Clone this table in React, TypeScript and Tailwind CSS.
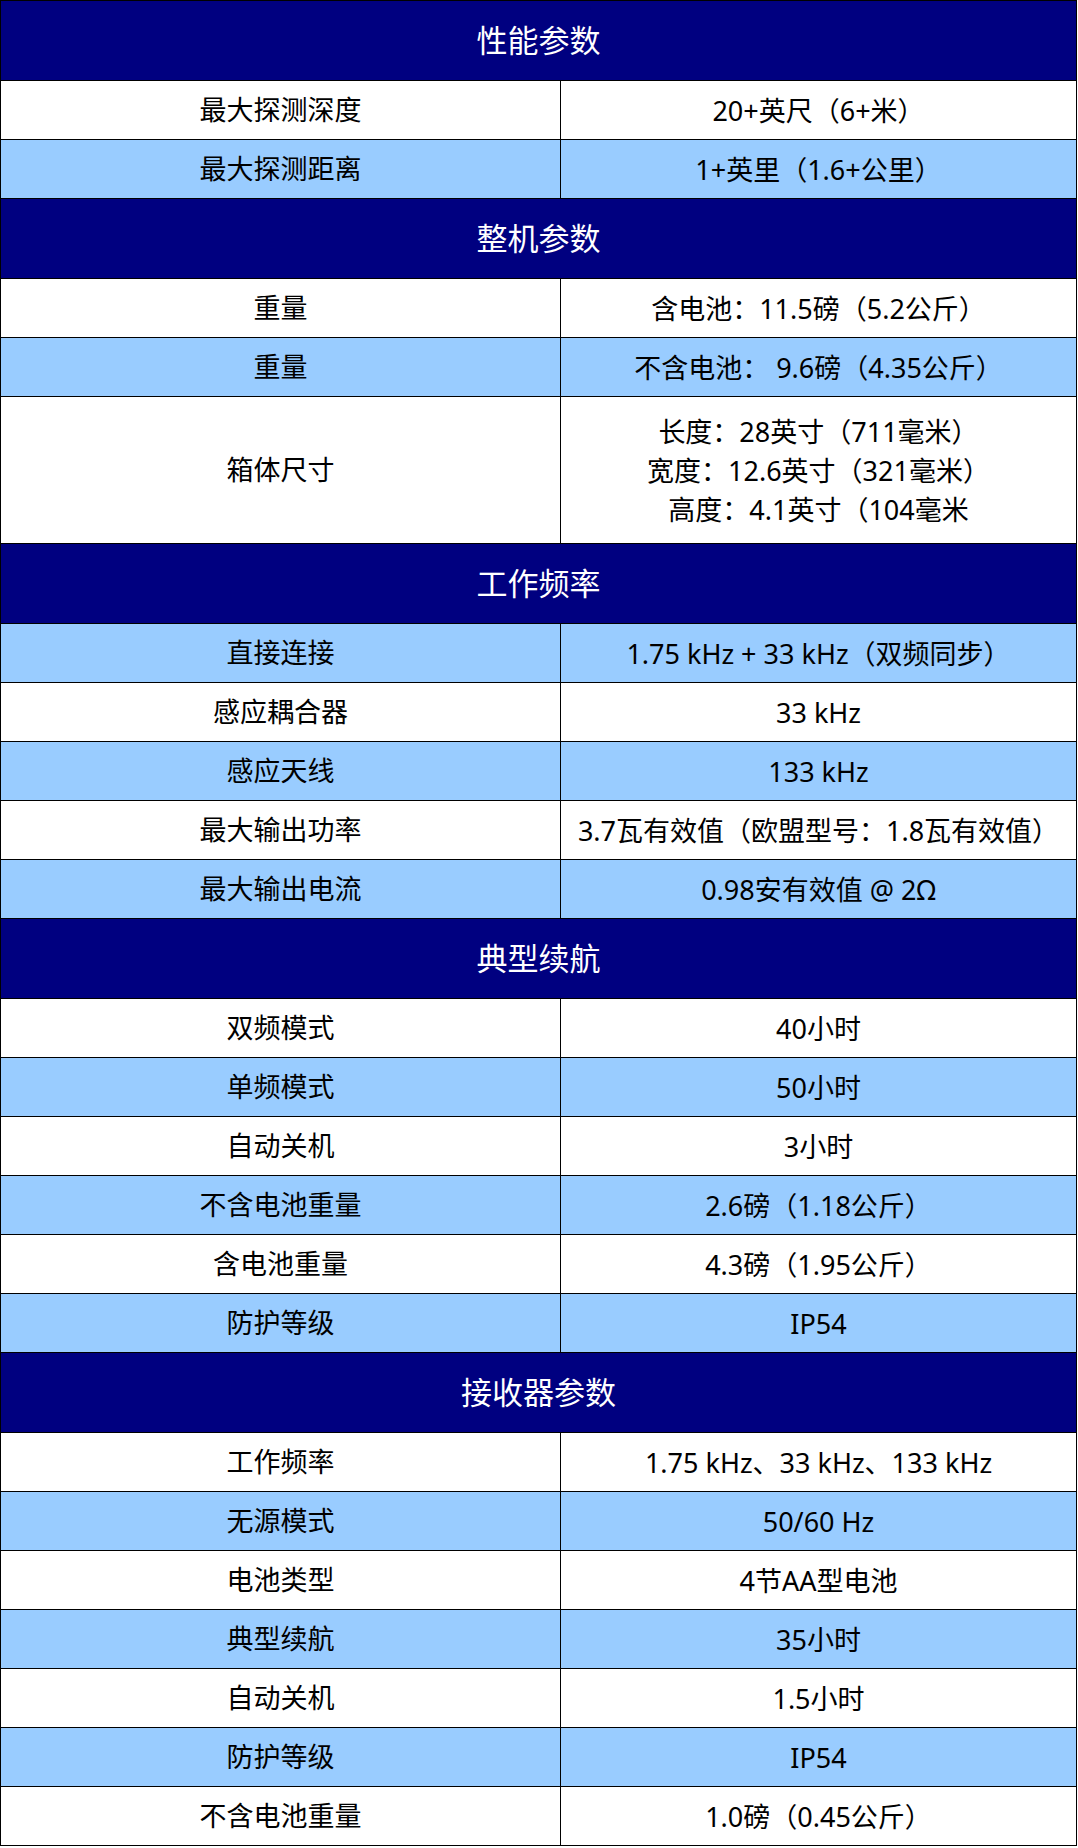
type Row = { label: string; value: string[]; blue?: boolean; tall?: boolean };
type Section = { title: string; rows: Row[] };

const sections: Section[] = [
  {
    title: '性能参数',
    rows: [
      { label: '最大探测深度', value: ['20+英尺（6+米）'] },
      { label: '最大探测距离', value: ['1+英里（1.6+公里）'], blue: true },
    ],
  },
  {
    title: '整机参数',
    rows: [
      { label: '重量', value: ['含电池：11.5磅（5.2公斤）'] },
      { label: '重量', value: ['不含电池： 9.6磅（4.35公斤）'], blue: true },
      {
        label: '箱体尺寸',
        value: ['长度：28英寸（711毫米）', '宽度：12.6英寸（321毫米）', '高度：4.1英寸（104毫米'],
        tall: true,
      },
    ],
  },
  {
    title: '工作频率',
    rows: [
      { label: '直接连接', value: ['1.75 kHz + 33 kHz（双频同步）'], blue: true },
      { label: '感应耦合器', value: ['33 kHz'] },
      { label: '感应天线', value: ['133 kHz'], blue: true },
      { label: '最大输出功率', value: ['3.7瓦有效值（欧盟型号：1.8瓦有效值）'] },
      { label: '最大输出电流', value: ['0.98安有效值 @ 2Ω'], blue: true },
    ],
  },
  {
    title: '典型续航',
    rows: [
      { label: '双频模式', value: ['40小时'] },
      { label: '单频模式', value: ['50小时'], blue: true },
      { label: '自动关机', value: ['3小时'] },
      { label: '不含电池重量', value: ['2.6磅（1.18公斤）'], blue: true },
      { label: '含电池重量', value: ['4.3磅（1.95公斤）'] },
      { label: '防护等级', value: ['IP54'], blue: true },
    ],
  },
  {
    title: '接收器参数',
    rows: [
      { label: '工作频率', value: ['1.75 kHz、33 kHz、133 kHz'] },
      { label: '无源模式', value: ['50/60 Hz'], blue: true },
      { label: '电池类型', value: ['4节AA型电池'] },
      { label: '典型续航', value: ['35小时'], blue: true },
      { label: '自动关机', value: ['1.5小时'] },
      { label: '防护等级', value: ['IP54'], blue: true },
      { label: '不含电池重量', value: ['1.0磅（0.45公斤）'] },
    ],
  },
];

export default function App() {
  return (
    <div className="bg-white min-h-screen font-['Noto_Sans','Noto_Sans_CJK_SC',sans-serif]">
      <div className="w-[1077px] border-x border-t border-black">
        {sections.map((s) => (
          <div key={s.title}>
            {/* section header */}
            <div className="h-[80px] bg-[#000080] border-b border-black flex items-center justify-center text-white text-[31px]">
              {s.title}
            </div>
            {s.rows.map((r, i) => (
              <div
                key={i}
                className={`flex border-b border-black text-black text-[27px] ${r.tall ? 'h-[147px]' : 'h-[59px]'} ${
                  r.blue ? 'bg-[#99ccff]' : 'bg-white'
                }`}
              >
                <div className="w-[560px] border-r border-black flex items-center justify-center">{r.label}</div>
                <div className="flex-1 flex flex-col items-center justify-center leading-[39px]">
                  {r.value.map((v) => (
                    <span key={v}>{v}</span>
                  ))}
                </div>
              </div>
            ))}
          </div>
        ))}
      </div>
    </div>
  );
}
